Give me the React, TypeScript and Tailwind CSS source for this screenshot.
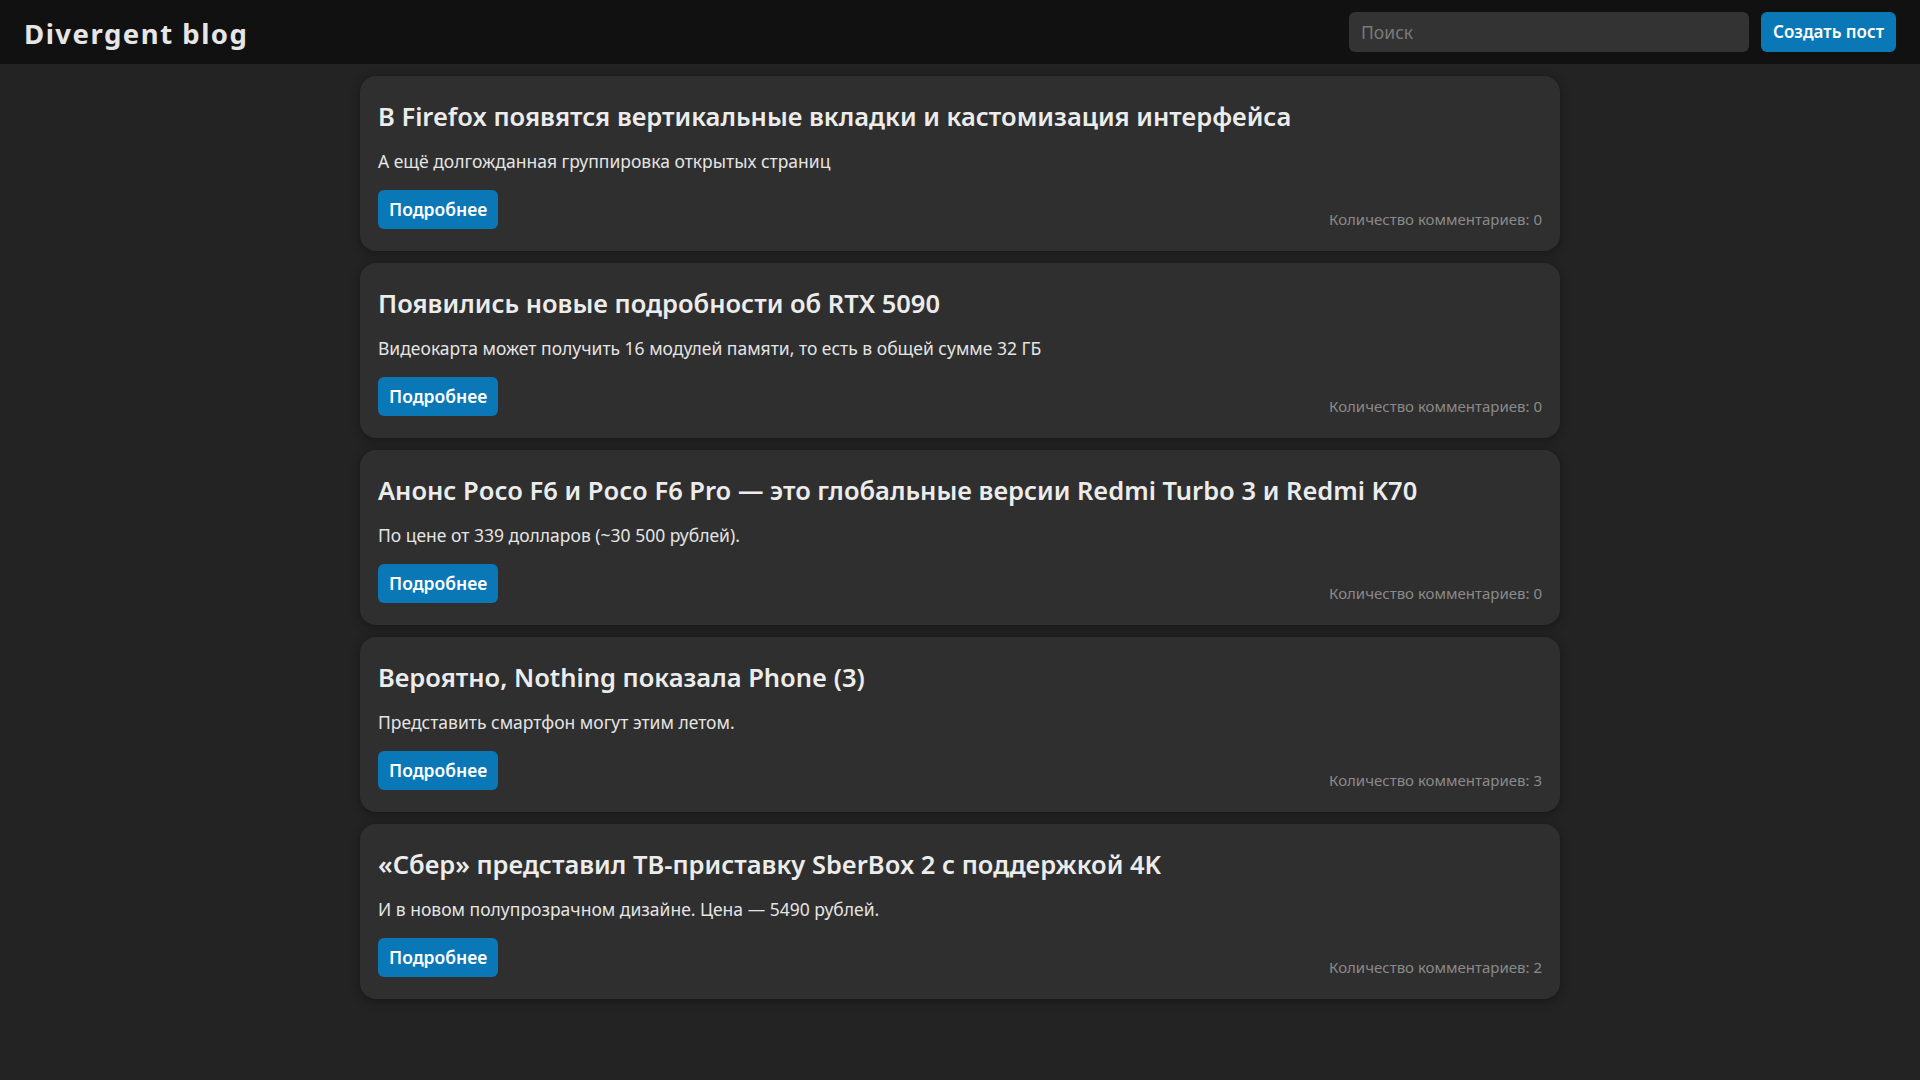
import React from 'react';

interface Post {
    id: number;
    title: string;
    summary: string;
    comments: number;
}

const posts: Post[] = [
    { id: 1, title: 'В Firefox появятся вертикальные вкладки и кастомизация интерфейса', summary: 'А ещё долгожданная группировка открытых страниц', comments: 0 },
    { id: 2, title: 'Появились новые подробности об RTX 5090', summary: 'Видеокарта может получить 16 модулей памяти, то есть в общей сумме 32 ГБ', comments: 0 },
    { id: 3, title: 'Анонс Poco F6 и Poco F6 Pro — это глобальные версии Redmi Turbo 3 и Redmi K70', summary: 'По цене от 339 долларов (~30 500 рублей).', comments: 0 },
    { id: 4, title: 'Вероятно, Nothing показала Phone (3)', summary: 'Представить смартфон могут этим летом.', comments: 3 },
    { id: 5, title: '«Сбер» представил ТВ-приставку SberBox 2 с поддержкой 4K', summary: 'И в новом полупрозрачном дизайне. Цена — 5490 рублей.', comments: 2 },
];

const PostCard: React.FC<{ post: Post }> = ({ post }) => (
    <div className="h-[175px] bg-[#2f2f2f] rounded-2xl px-[18px] pt-[24px] pb-[22px] shadow-[0_2px_10px_rgba(0,0,0,0.35)] flex flex-col">
        <h2 className="text-[25.5px] leading-[32px] font-semibold text-[#ececec]">{post.title}</h2>
        <p className="mt-[17px] text-[17.5px] leading-[24px] text-[#e4e4e4]">{post.summary}</p>
        <div className="mt-auto flex items-end justify-between">
            <button className="h-[39px] px-[11px] rounded-md bg-[#0a78b6] text-white text-[17.5px] font-semibold">
                Подробнее
            </button>
            <span className="text-[15px] text-[#8a8a8a] leading-[20px]">
                Количество комментариев: {post.comments}
            </span>
        </div>
    </div>
);

const App: React.FC = () => {
    return (
        <div className="min-h-screen bg-[#232323] font-['Noto_Sans',sans-serif]">
            {/* Header */}
            <header className="h-16 bg-[#111111] flex items-center justify-between px-6">
                <h1 className="text-[27.5px] font-bold tracking-[1.5px] text-[#e6e6e6] pt-1">Divergent blog</h1>
                <div className="flex items-center gap-3">
                    <input
                        type="text"
                        placeholder="Поиск"
                        className="w-[400px] h-10 bg-[#333333] rounded-md px-3 text-[17.5px] text-white placeholder-[#7a7a7a] outline-none"
                    />
                    <button className="h-10 px-3 rounded-md bg-[#0a78b6] text-white text-[17px] font-semibold">
                        Создать пост
                    </button>
                </div>
            </header>

            {/* Posts */}
            <main className="max-w-[1200px] mx-auto pt-3 flex flex-col gap-3">
                {posts.map(post => (
                    <PostCard key={post.id} post={post} />
                ))}
            </main>
        </div>
    );
};

export default App;
